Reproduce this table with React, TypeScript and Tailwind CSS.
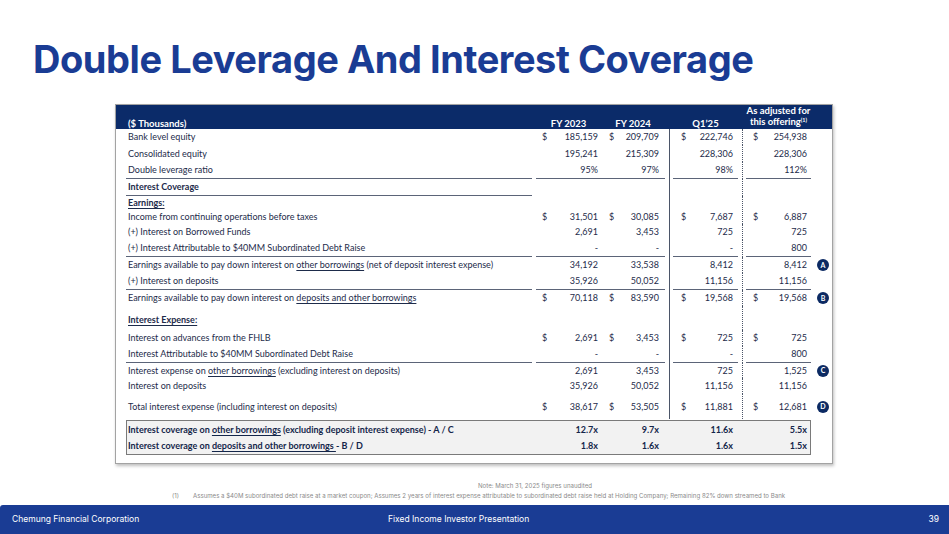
import type { ReactNode } from "react"

const COLS = "grid grid-cols-[418px_67px_64px_8px_67px_4px_67px_23px]"
const LINE = "border-b border-[#5b6478]"

type LineKind = "none" | "all" | "label" | "cells"

function Badge({ letter }: { letter: string }) {
  return (
    <div className="flex items-center">
      <div className="ml-[6px] flex h-[12px] w-[12px] items-center justify-center rounded-full bg-[#0c2a63] text-[7px] font-bold leading-none text-white">
        {letter}
      </div>
    </div>
  )
}

function Val({ v, d, cls, line }: { v?: string; d?: boolean; cls: string; line: boolean }) {
  return (
    <div className={`flex items-center justify-between ${cls} ${line ? LINE : ""}`}>
      <span>{d ? "$" : ""}</span>
      <span>{v}</span>
    </div>
  )
}

function Row({
  label,
  vals,
  dollar,
  line = "none",
  badge,
  h,
}: {
  label?: ReactNode
  vals?: string[]
  dollar?: boolean
  line?: LineKind
  badge?: string
  h: string
}) {
  const lb = line !== "none"
  const cb = line === "all" || line === "cells"
  const v = vals ?? []
  return (
    <div className={`${COLS} ${h}`}>
      <div className={`ml-[10px] mr-[2px] flex items-center pl-[2px] ${lb ? LINE : ""}`}>{label}</div>
      <Val v={v[0]} d={dollar} cls="ml-[2px] pl-[6px] pr-[3px]" line={cb} />
      <Val v={v[1]} d={dollar} cls="pl-[8px] pr-[6px]" line={cb} />
      <div className="flex justify-center">
        <div className="w-px bg-[#4b5568]" />
      </div>
      <Val v={v[2]} d={dollar} cls="mr-[2px] pl-[8px] pr-[5px]" line={cb} />
      <div className="flex justify-center">
        <div className="border-l border-dotted border-[#4b5568]" />
      </div>
      <Val v={v[3]} d={dollar} cls="ml-[2px] pl-[7px] pr-[4px]" line={cb} />
      {badge ? <Badge letter={badge} /> : <div />}
    </div>
  )
}

function U({ children }: { children: ReactNode }) {
  return <span className="underline decoration-1 underline-offset-[1.5px]">{children}</span>
}

function SumRow({ label, vals }: { label: ReactNode; vals: string[] }) {
  return (
    <div className="grid h-[16px] grid-cols-[407px_67px_64px_8px_67px_4px_67px] font-bold">
      <div className="flex items-center pl-[1px]">{label}</div>
      <div className="ml-[2px] flex items-center justify-end pr-[3px]">{vals[0]}</div>
      <div className="flex items-center justify-end pr-[6px]">{vals[1]}</div>
      <div />
      <div className="mr-[2px] flex items-center justify-end pr-[5px]">{vals[2]}</div>
      <div />
      <div className="ml-[2px] flex items-center justify-end pr-[4px]">{vals[3]}</div>
    </div>
  )
}

export default function App() {
  return (
    <div className="flex h-[534px] w-[949px] flex-col overflow-hidden bg-white font-[Lato,sans-serif]">
      <h1 className="pl-[33px] pt-[40px] font-[Inter,sans-serif] text-[38px] font-bold leading-none tracking-[-0.45px] text-[#1a3c94]">
        Double Leverage And Interest Coverage
      </h1>

      <div className="ml-[115px] mt-[26px] w-[718px] border border-[#a3a3a3] shadow-[1px_2px_3px_rgba(0,0,0,0.25)] text-[9px] text-[#1d2b4a]">
        {/* header */}
        <div className={`${COLS} h-[24px] bg-[#0b2b69] text-[9.5px] font-bold leading-[11px] text-white`}>
          <div className="flex items-end pb-[2px] pl-[12px]">($ Thousands)</div>
          <div className="ml-[2px] flex items-end justify-center pb-[2px]">FY 2023</div>
          <div className="flex items-end justify-center pb-[2px]">FY 2024</div>
          <div />
          <div className="mr-[2px] flex items-end justify-center pb-[2px]">Q1’25</div>
          <div />
          <div className="ml-[2px] flex flex-col items-center justify-end whitespace-nowrap pb-[2px] text-center">
            <span>As adjusted for</span>
            <span className="leading-[11px]">
              this offering<span className="relative -top-[3px] text-[5.5px]">(1)</span>
            </span>
          </div>
          <div />
        </div>

        <Row h="h-[16px]" label="Bank level equity" vals={["185,159", "209,709", "222,746", "254,938"]} dollar />
        <Row h="h-[17px]" label="Consolidated equity" vals={["195,241", "215,309", "228,306", "228,306"]} />
        <Row h="h-[17px]" label="Double leverage ratio" vals={["95%", "97%", "98%", "112%"]} line="all" />
        <Row h="h-[17px]" label={<span className="font-bold">Interest Coverage</span>} line="label" />
        <Row h="h-[13px]" label={<span className="font-bold"><U>Earnings:</U></span>} />
        <Row
          h="h-[15px]"
          label="Income from continuing operations before taxes"
          vals={["31,501", "30,085", "7,687", "6,887"]}
          dollar
        />
        <Row h="h-[16px]" label="(+) Interest on Borrowed Funds" vals={["2,691", "3,453", "725", "725"]} />
        <Row
          h="h-[17px]"
          label="(+) Interest Attributable to $40MM Subordinated Debt Raise"
          vals={["-", "-", "-", "800"]}
          line="cells"
        />
        <Row
          h="h-[16px]"
          label={
            <span>
              Earnings available to pay down interest on <U>other borrowings</U> (net of deposit interest expense)
            </span>
          }
          vals={["34,192", "33,538", "8,412", "8,412"]}
          badge="A"
        />
        <Row h="h-[17px]" label="(+) Interest on deposits" vals={["35,926", "50,052", "11,156", "11,156"]} line="all" />
        <Row
          h="h-[16px]"
          label={
            <span>
              Earnings available to pay down interest on <U>deposits and other borrowings</U>
            </span>
          }
          vals={["70,118", "83,590", "19,568", "19,568"]}
          dollar
          badge="B"
        />
        <Row h="h-[24px]" label={<span className="pt-[3px] font-bold"><U>Interest Expense:</U></span>} />
        <Row h="h-[16px]" label="Interest on advances from the FHLB" vals={["2,691", "3,453", "725", "725"]} dollar />
        <Row
          h="h-[17px]"
          label="Interest Attributable to $40MM Subordinated Debt Raise"
          vals={["-", "-", "-", "800"]}
          line="cells"
        />
        <Row
          h="h-[15px]"
          label={
            <span>
              Interest expense on <U>other borrowings</U> (excluding interest on deposits)
            </span>
          }
          vals={["2,691", "3,453", "725", "1,525"]}
          badge="C"
        />
        <Row h="h-[16px]" label="Interest on deposits" vals={["35,926", "50,052", "11,156", "11,156"]} />
        <Row
          h="h-[25px]"
          label="Total interest expense (including interest on deposits)"
          vals={["38,617", "53,505", "11,881", "12,681"]}
          dollar
          badge="D"
        />

        <div className="ml-[10px] mt-[1px] w-[685px] border border-[#7a7a7a] bg-[#f2f2f2] py-[0.5px] text-[#14264a]">
          <SumRow
            label={
              <span>
                Interest coverage on <U>other borrowings</U> (excluding deposit interest expense) - A / C
              </span>
            }
            vals={["12.7x", "9.7x", "11.6x", "5.5x"]}
          />
          <SumRow
            label={
              <span>
                Interest coverage on <U>deposits and other borrowings </U> - B / D
              </span>
            }
            vals={["1.8x", "1.6x", "1.6x", "1.5x"]}
          />
        </div>
        <div className="h-[8px]" />
      </div>

      <div className="mt-[17px] flex flex-col font-[Inter,sans-serif] text-[6.1px] leading-[10px] text-[#8a8a8a]">
        <div className="pl-[478px]">Note: March 31, 2025 figures unaudited</div>
        <div className="flex pl-[172px]">
          <span className="w-[21px]">(1)</span>
          <span>
            Assumes a $40M subordinated debt raise at a market coupon; Assumes 2 years of interest expense attributable
            to subordinated debt raise held at Holding Company; Remaining 82% down streamed to Bank
          </span>
        </div>
      </div>

      <div className="mt-auto flex h-[29px] items-center rounded-tl-[3px] bg-[#1a3c94] pl-[12px] pr-[10px] font-[Inter,sans-serif] text-[8.5px] text-white">
        <span className="w-[376px]">Chemung Financial Corporation</span>
        <span className="flex-1">Fixed Income Investor Presentation</span>
        <span>39</span>
      </div>
    </div>
  )
}
